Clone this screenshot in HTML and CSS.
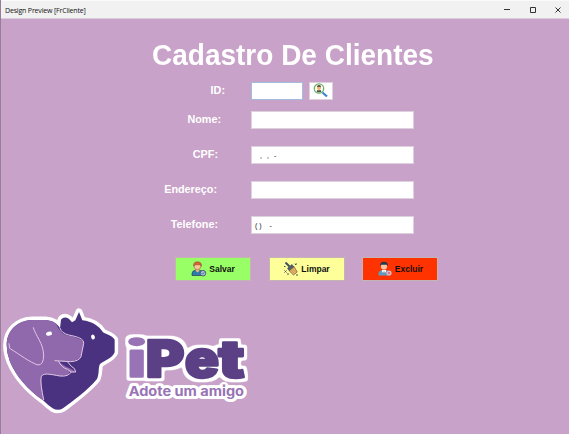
FILE: index.html
```html
<!DOCTYPE html>
<html lang="pt-BR">
<head>
<meta charset="utf-8">
<title>Design Preview [FrCliente]</title>
<link rel="stylesheet" href="styles.css">
</head>
<body>
<div class="window">
  <header class="titlebar">
    <span class="caption">Design Preview [FrCliente]</span>
    <svg class="controls" width="64" height="16" viewBox="0 0 64 16" fill="none" stroke="#333" stroke-width="1"><path d="M3 8.500h6M29.500 6.500h5v5h-5zM54.500 6.500l5 5M59.500 6.500l-5 5"/></svg>
  </header>
  <main>
    <h1>Cadastro De Clientes</h1>
    <form class="fields">
      <div class="row first"><label class="id" for="id">ID:</label><input id="id" class="short"><button type="button" class="search" aria-label="Buscar">
        <svg width="16" height="16" viewBox="0 0 16 16"><path d="M9.500 9.500l4.500 4" stroke="#3d83cf" stroke-width="2.200"/><circle cx="6" cy="5.500" r="4.700" fill="#fff" stroke="#68b36b" stroke-width="1.300"/><path d="M3.500 8.500q.5-1.700 2.500-1.700t2.500 1.700q-2.500 1.300-5 0" fill="#333a40"/><circle cx="6" cy="5" r="2" fill="#eeb76d"/><path d="M4 4.300q-.2-2.200 2-2.200t2 2.200q-2-1.300-4 0" fill="#574034"/><path d="M5.100 6.400h1.800L6 9z" fill="#f0a860"/></svg>
      </button></div>
      <div class="row"><label class="nome" for="nome">Nome:</label><input id="nome"></div>
      <div class="row"><label class="cpf" for="cpf">CPF:</label><div class="mask cpfmask" id="cpf"><span>,</span><span>,</span><span>-</span></div></div>
      <div class="row"><label class="end" for="end">Endereço:</label><input id="end"></div>
      <div class="row"><label class="tel" for="tel">Telefone:</label><div class="mask telmask" id="tel"><span>( )</span><span>-</span></div></div>
    </form>
    <div class="actions">
      <button type="button" class="save"><svg width="16" height="16" viewBox="0 0 16 16"><path d="M1 14.500v-2q0-3 4-3.500h3q4 .5 4 3.500v2z" fill="#287fae" stroke="#263d50" stroke-width=".7"/><path d="M4.800 8v2l1.700 1.500L8.300 10V8z" fill="#f5b184"/><circle cx="6.500" cy="5.300" r="3.300" fill="#ffc59b" stroke="#76503c" stroke-width=".5"/><path d="M2.600 5.300Q2 .8 6.500.8t4 4.500L9.600 3.800H4z" fill="#db6332" stroke="#703a2a" stroke-width=".4"/><circle cx="12" cy="12.200" r="2.800" fill="#a8bfd8" stroke="#405871" stroke-width=".9"/><path d="M10.700 12.200l1 1 1.600-2" fill="none" stroke="#405871" stroke-width=".8"/></svg>Salvar</button>
      <button type="button" class="clear"><svg width="16" height="16" viewBox="0 0 16 16"><path d="M2.500 1.500l4 4" stroke="#42515c" stroke-width="2"/><path d="M4.500 7.200L9 3.500l2 2.500-4.500 4z" fill="#50606b" stroke="#303c44" stroke-width=".6"/><path d="M6.200 9.800l5-4 3 5.200-3.700 3z" fill="#e4b76b" stroke="#715532" stroke-width=".7"/><path d="M8.200 9l3 3.700M9.800 7.800l2.800 3.500" stroke="#a98048" stroke-width=".5"/><path d="M1.500 9.500l2 2m0-2l-2 2M12 2.500l1.500 1.500m0-1.500L12 4M4 13h2M13 14h2M1 5.500h1.500" stroke="#475159" stroke-width="1"/></svg>Limpar</button>
      <button type="button" class="delete"><svg width="16" height="16" viewBox="0 0 16 16"><path d="M1.500 14.500v-2q0-3 4-3.500h3q4 .5 4 3.500v2z" fill="#5f9ac0"/><path d="M5 9v1.500L7 13l2-2.500V9z" fill="#fff"/><path d="M6.500 10.500h1V13h-1z" fill="#416079"/><circle cx="7" cy="5.500" r="3.100" fill="#f5c5a5"/><path d="M3.200 5.300Q2.600.8 7 .8t4 4.500l-1-1.600H4.300z" fill="#263b50"/><circle cx="12" cy="12" r="2.600" fill="#dab9c2"/><path d="M11 11l2 2m0-2l-2 2" stroke="#e5626a" stroke-width=".8"/></svg>Excluir</button>
    </div>
    <svg class="logo" width="250" height="120" viewBox="0 0 750 360" role="img" aria-label="iPet">
      <defs>
        <path id="mark" d="M20 136C20 92 52 61 98 60H137C160 62 174 73 180 85L183 59C193 46 207 53 216 67L226 61L237 36L247 61C276 64 297 78 309 97C324 105 337 108 344 119L344 157C337 174 317 180 300 192C294 203 299 220 291 237C263 271 221 301 189 325Q174 334 158 325Q143 315 129 301C83 268 48 228 30 185Q20 160 20 136Z"/>
        <clipPath id="clip"><use href="#mark"/></clipPath>
        <filter id="halo" x="-10%" y="-20%" width="120%" height="140%" color-interpolation-filters="sRGB">
          <feMorphology in="SourceAlpha" operator="dilate" radius="10" result="wide"/>
          <feGaussianBlur in="wide" stdDeviation="2.500" result="soft"/>
          <feComponentTransfer in="soft" result="shape"><feFuncR type="linear" slope="0" intercept="1"/><feFuncG type="linear" slope="0" intercept="1"/><feFuncB type="linear" slope="0" intercept="1"/><feFuncA type="linear" slope="2.500" intercept="-.7"/></feComponentTransfer>
          <feMerge><feMergeNode in="shape"/><feMergeNode in="SourceGraphic"/></feMerge>
        </filter>
      </defs>
      <use href="#mark" fill="#fff" stroke="#fff" stroke-width="21" stroke-linejoin="round"/>
      <use href="#mark" fill="#4b3280"/>
      <g clip-path="url(#clip)">
        <path d="M0 40H158C168 74 176 92 190 101C206 109 235 110 250 124Q254 132 247 151L243 172Q225 188 190 185L174 182Q184 192 200 201C213 206 223 211 226 217Q218 216 208 216Q207 227 187 228C165 229 145 217 129 224Q122 229 124 250L131 310L0 300Z" fill="#8f69ab"/>
      </g>
      <g fill="none" stroke="#dfc7e4" stroke-width="3" stroke-linecap="round" stroke-linejoin="round">
        <path d="M180 85Q184 99 206 105C233 110 253 117 251 130L243 170Q237 184 211 185L165 182M176 184Q184 203 203 208L214 216H227Q226 204 214 199L203 186M214 216Q205 231 180 228C154 224 122 214 123 236Q121 252 131 299M100 83C107 108 130 130 131 165Q131 195 114 195C89 187 60 164 29 145L27 131"/>
      </g>
      <ellipse cx="147" cy="101" rx="9" ry="6" transform="rotate(-15 147 101)" fill="#fff"/>
      <ellipse cx="279" cy="111" rx="5.500" ry="7.500" transform="rotate(-20 279 111)" fill="#fff"/>
      <g class="wordmark" filter="url(#halo)">
        <ellipse class="light" cx="410" cy="125" rx="23" ry="11"/>
        <rect class="light" x="391" y="151" width="38" height="80" rx="2"/>
        <text x="437" y="232" textLength="116" lengthAdjust="spacingAndGlyphs">P</text>
        <text x="554" y="232" textLength="103" lengthAdjust="spacingAndGlyphs">e</text>
        <text x="655" y="232" textLength="79" lengthAdjust="spacingAndGlyphs">t</text>
      </g>
      <text class="tagline" x="386" y="287" textLength="346" lengthAdjust="spacingAndGlyphs">Adote um amigo</text>
    </svg>
  </main>
</div>
</body>
</html>
```
FILE: styles.css
```css
* { box-sizing: border-box; }
body { margin: 0; font-family: "Liberation Sans", Arial, sans-serif; }
.window { width: 569px; height: 434px; overflow: hidden; background: #c8a2c8; border-left: 1px solid #967d99; }
.titlebar { height: 19px; padding: 2px 4px 0; background: #f1f1f1; border-top: 1px solid #fafafa; border-bottom: 1px solid #dccbdd; display: flex; align-items: center; justify-content: space-between; }
.caption { font: 7px/12px "Open Sans", sans-serif; letter-spacing: -.17px; color: #111; white-space: nowrap; }
.controls { margin: -3px 0 0 0; }
main { display: flex; flex-direction: column; align-items: flex-start; }
h1 { margin: 19px 0 0 151px; font-size: 28px; line-height: 34px; color: #fff; white-space: nowrap; transform: scaleY(1.06); }
.fields { margin: 10px 0 0; display: flex; flex-direction: column; gap: 17px; }
.row { display: flex; height: 18px; align-items: center; }
.row.first { margin-bottom: -6px; }
label { width: 250px; text-align: right; color: #fff; font-size: 10.800px; font-weight: bold; line-height: 14px; margin-top: -2px; }
.id { padding-right: 26px; }
.nome { padding-right: 30px; }
.cpf { padding-right: 33px; }
.end { padding-right: 34px; }
.tel { padding-right: 33px; }
input, .mask { width: 163px; height: 18px; border: 1px solid #ddd1dd; background: #fff; margin: 0; padding: 0 3px; font: 7px/17px "Liberation Sans", sans-serif; color: #111; }
.short { width: 52px; border-color: #a1bddb; }
.mask { display: flex; }
.cpfmask { padding-left: 8px; gap: 5px; }
.telmask { gap: 8px; }
.search { width: 24px; height: 18px; margin-left: 6px; border: 1px solid #ddd1dd; background: #fff; padding: 0; display: flex; justify-content: center; align-items: center; }
.actions { display: flex; gap: 17.500px; margin: 23px 0 0 174px; }
.actions button { width: 76px; height: 24px; border: 1px solid #c4b4b4; padding: 0; display: flex; align-items: center; justify-content: center; gap: 2px; font: bold 8.500px/12px "Liberation Sans", sans-serif; color: #111; }
.actions .save { background: #9f6; }
.actions .clear { background: #ff9; }
.actions .delete { background: #f30; }
.logo { margin: 19px 0 0 -1px; display: block; }
.wordmark text { font: 900 154px Inter, sans-serif; fill: #5b4086; stroke: #5b4086; stroke-width: 7px; stroke-linejoin: round; }
.light { fill: #9873b5; stroke: #9873b5; stroke-width: 5px; }
.tagline { font: 700 39px Inter, sans-serif; fill: #9873b5; stroke: #fff; stroke-width: 18px; stroke-linejoin: round; paint-order: stroke; }
```
